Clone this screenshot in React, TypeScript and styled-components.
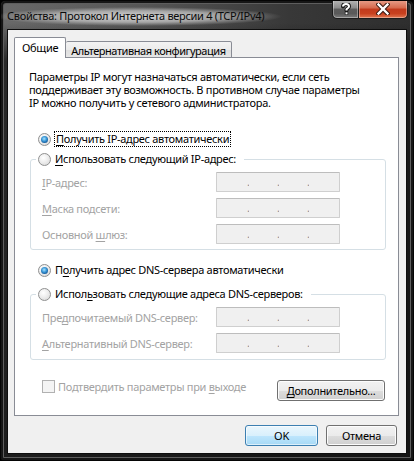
import React from 'react';
import styled, { createGlobalStyle } from 'styled-components';

const Global = createGlobalStyle`
  html, body { margin: 0; padding: 0; background: #000; }
  body { font-family: "Noto Sans", "Open Sans", sans-serif; font-size: 11px; letter-spacing: -0.3px; color: #000; }
  * { box-sizing: border-box; }
`;

const Window = styled.div`
  width: 414px;
  height: 461px;
  border: 1px solid #050505;
  border-radius: 6px 6px 4px 4px;
  background:
    linear-gradient(180deg, rgba(0,0,0,0) 0px, rgba(0,0,0,0) 22px, rgba(20,20,20,0.75) 60px, rgba(15,15,15,0.85) 100%),
    linear-gradient(90deg, #6a6a6a 0%, #555 35%, #383838 70%, #2e2e2e 100%);
  box-shadow: inset 0 0 0 2px #161616, inset 0 0 0 3px #5e5e5e;
  padding: 0 6px 6px 6px;
  display: flex;
  flex-direction: column;
  overflow: hidden;
`;

const TitleBar = styled.div`
  height: 28px;
  display: flex;
  align-items: flex-start;
  justify-content: space-between;
`;

const Title = styled.div`
  margin-top: 6px;
  margin-left: -14px;
  padding: 2px 18px 3px 14px;
  font-size: 11px;
  line-height: 14px;
  white-space: nowrap;
  color: #0a0a0a;
  background: radial-gradient(ellipse closest-side at 50% 50%, rgba(235,235,235,0.85) 0%, rgba(220,220,220,0.6) 60%, rgba(200,200,200,0) 100%);
`;

const CaptionButtons = styled.div`
  display: flex;
  margin-top: -1px;
  margin-right: -1px;
`;

const CaptionButton = styled.div<{ $close?: boolean }>`
  height: 19px;
  width: ${p => (p.$close ? 49 : 27)}px;
  display: flex;
  align-items: center;
  justify-content: center;
  border: 1px solid #1c1c1c;
  border-top: none;
  border-left: ${p => (p.$close ? 'none' : '1px solid #1c1c1c')};
  border-radius: ${p => (p.$close ? '0 0 5px 0' : '0 0 0 5px')};
  box-shadow: inset 0 0 0 1px rgba(255,255,255,0.35);
  background: ${p =>
    p.$close
      ? 'linear-gradient(180deg, #e8a08c 0%, #d6694c 45%, #c23a1d 50%, #c8411f 75%, #e07650 100%)'
      : 'linear-gradient(180deg, #b8b8b8 0%, #8a8a8a 45%, #5c5c5c 50%, #5a5a5a 75%, #7c7c7c 100%)'};
`;

const Client = styled.div`
  flex: 1;
  border: 1px solid #0e0e0e;
  background: #f0f0f0;
  padding: 7px 7px 0 6px;
  display: flex;
  flex-direction: column;
`;

const TabStrip = styled.div`
  display: flex;
  align-items: flex-end;
  height: 21px;
  margin-bottom: -1px;
  position: relative;
  z-index: 1;
`;

const Tab = styled.div<{ $active?: boolean }>`
  height: ${p => (p.$active ? 21 : 17)}px;
  padding: ${p => (p.$active ? '2px 7px 0 7px' : '1px 5px 0 5px')};
  border: 1px solid #898c95;
  border-bottom: ${p => (p.$active ? 'none' : '1px solid #898c95')};
  border-left: ${p => (p.$active ? '1px solid #898c95' : 'none')};
  border-radius: 2px 2px 0 0;
  background: ${p => (p.$active ? '#fff' : 'linear-gradient(180deg, #f3f3f3 0%, #ebebeb 50%, #dedede 51%, #e6e6e6 100%)')};
  line-height: 15px;
  letter-spacing: ${p => (p.$active ? '-0.3px' : '-0.45px')};
  white-space: nowrap;
`;

const Panel = styled.div`
  height: 359px;
  border: 1px solid #898c95;
  background: #fff;
  padding: 12px 12px 0 15px;
  display: flex;
  flex-direction: column;
`;

const Paragraph = styled.p`
  margin: 0 0 0 -1px;
  line-height: 13px;
  width: 338px;
`;

const RadioRow = styled.label<{ $mt: number }>`
  display: flex;
  align-items: center;
  height: 16px;
  margin-top: ${p => p.$mt}px;
  margin-left: 8px;
  gap: 4px;
  line-height: 14px;
  white-space: nowrap;
`;

const RadioCircle = styled.span<{ $checked?: boolean }>`
  width: 13px;
  height: 13px;
  border-radius: 50%;
  border: 1px solid #8f9090;
  background: radial-gradient(circle at 40% 35%, #ffffff 0%, #f0f0f0 40%, #d4d4d4 100%);
  display: flex;
  align-items: center;
  justify-content: center;
  flex: none;
  &::after {
    content: '';
    display: ${p => (p.$checked ? 'block' : 'none')};
    width: 7px;
    height: 7px;
    border-radius: 50%;
    background: radial-gradient(circle at 45% 40%, #a9e4ff 0%, #3d9ad9 40%, #0c4f8f 80%, #0b3f74 100%);
  }
`;

const Focus = styled.span`
  outline: 1px dotted #000;
  outline-offset: 0;
  padding: 0 1px;
`;

const Group = styled.div<{ $mt: number; $pb: number }>`
  margin-top: ${p => p.$mt}px;
  border: 1px solid #d5dfe5;
  border-radius: 3px;
  padding-bottom: ${p => p.$pb}px;
  display: flex;
  flex-direction: column;
`;

const Legend = styled.label`
  align-self: flex-start;
  display: flex;
  align-items: center;
  gap: 4px;
  height: 16px;
  margin: -9px 0 0 5px;
  padding: 0 8px 0 2px;
  background: #fff;
  line-height: 14px;
  white-space: nowrap;
`;

const Fields = styled.div`
  margin-top: 5px;
  padding-left: 11px;
  display: grid;
  grid-template-columns: 174px 124px;
  row-gap: 6px;
  align-items: center;
`;

const FieldLabel = styled.span`
  color: #a3a3a3;
  white-space: nowrap;
`;

const IpBox = styled.div`
  height: 20px;
  border: 1px solid #cfcfcf;
  border-top-color: #bdbdbd;
  border-radius: 1px;
  background: #f0f0f0;
  display: grid;
  grid-template-columns: 30px 30px 30px 30px;
  padding-left: 2px;
`;

const Dot = styled.span`
  justify-self: end;
  color: #8a8a8a;
  font-size: 11px;
  line-height: 18px;
  width: 2px;
  overflow: hidden;
`;

const BottomRow = styled.div`
  margin-top: 20px;
  margin-left: 12px;
  margin-right: 1px;
  display: flex;
  justify-content: space-between;
  align-items: flex-start;
`;

const CheckLabel = styled.label`
  display: flex;
  align-items: center;
  gap: 3px;
  color: #a3a3a3;
  line-height: 13px;
  height: 13px;
`;

const CheckBox = styled.span`
  width: 13px;
  height: 13px;
  border: 1px solid #b1b1b1;
  background: #f4f4f4;
  flex: none;
`;

const Button = styled.button<{ $w: number; $default?: boolean }>`
  width: ${p => p.$w}px;
  height: 21px;
  padding: 0;
  font-family: inherit;
  font-size: 11px;
  letter-spacing: -0.3px;
  color: #000;
  border-radius: 3px;
  border: 1px solid ${p => (p.$default ? '#3c7fb1' : '#707070')};
  box-shadow: inset 0 0 0 1px ${p => (p.$default ? 'rgba(255,255,255,0.6)' : '#fcfcfc')};
  background: ${p =>
    p.$default
      ? 'linear-gradient(180deg, #eaf6fd 0%, #d9f0fc 50%, #bee6fd 51%, #a7d9f5 100%)'
      : 'linear-gradient(180deg, #f2f2f2 0%, #ebebeb 50%, #dddddd 51%, #cfcfcf 100%)'};
  line-height: 17px;
`;

const ButtonRow = styled.div`
  margin-top: 9px;
  margin-right: 2px;
  display: flex;
  justify-content: flex-end;
  gap: 8px;
`;

const IpField = () => (
  <IpBox>
    <Dot>.</Dot>
    <Dot>.</Dot>
    <Dot>.</Dot>
  </IpBox>
);

const U = styled.u`
  text-decoration-thickness: 1px;
  text-underline-offset: 2px;
`;

export default function App() {
  return (
    <>
      <Global />
      <Window>
        <TitleBar>
          <Title>Свойства: Протокол Интернета версии 4 (TCP/IPv4)</Title>
          <CaptionButtons>
            <CaptionButton>
              <svg width="10" height="12" viewBox="0 0 10 12">
                <path d="M2 3.5 C2 1.5 3.5 1 5 1 C6.8 1 8 2 8 3.5 C8 5 6 5.3 5.5 6.5 L5.5 7.5" fill="none" stroke="#1a1a1a" strokeWidth="4" strokeLinecap="round" />
                <path d="M2 3.5 C2 1.5 3.5 1 5 1 C6.8 1 8 2 8 3.5 C8 5 6 5.3 5.5 6.5 L5.5 7.5" fill="none" stroke="#fff" strokeWidth="2" />
                <rect x="3.8" y="8.8" width="3.4" height="3" fill="#1a1a1a" />
                <rect x="4.5" y="9.3" width="2" height="2" fill="#fff" />
              </svg>
            </CaptionButton>
            <CaptionButton $close>
              <svg width="14" height="12" viewBox="0 0 14 12">
                <path d="M2.5 1.5 L11.5 10.5 M11.5 1.5 L2.5 10.5" stroke="#3a1a12" strokeWidth="4.4" strokeLinecap="square" />
                <path d="M2.5 1.5 L11.5 10.5 M11.5 1.5 L2.5 10.5" stroke="#fff" strokeWidth="2.4" strokeLinecap="square" />
              </svg>
            </CaptionButton>
          </CaptionButtons>
        </TitleBar>
        <Client>
          <TabStrip>
            <Tab $active>Общие</Tab>
            <Tab>Альтернативная конфигурация</Tab>
          </TabStrip>
          <Panel>
            <Paragraph>
              Параметры IP могут назначаться автоматически, если сеть поддерживает эту возможность. В противном случае параметры IP можно получить у сетевого администратора.
            </Paragraph>
            <RadioRow $mt={22}>
              <RadioCircle $checked />
              <Focus><U>П</U>олучить IP-адрес автоматически</Focus>
            </RadioRow>
            <Group $mt={12} $pb={5}>
              <Legend>
                <RadioCircle />
                <span><U>И</U>спользовать следующий IP-адрес:</span>
              </Legend>
              <Fields>
                <FieldLabel><U>I</U>P-адрес:</FieldLabel>
                <IpField />
                <FieldLabel><U>М</U>аска подсети:</FieldLabel>
                <IpField />
                <FieldLabel>Основной <U>ш</U>люз:</FieldLabel>
                <IpField />
              </Fields>
            </Group>
            <RadioRow $mt={12}>
              <RadioCircle $checked />
              <span>П<U>о</U>лучить адрес DNS-сервера автоматически</span>
            </RadioRow>
            <Group $mt={16} $pb={6}>
              <Legend>
                <RadioCircle />
                <span>Испол<U>ь</U>зовать следующие адреса DNS-серверов:</span>
              </Legend>
              <Fields>
                <FieldLabel>Пре<U>д</U>почитаемый DNS-сервер:</FieldLabel>
                <IpField />
                <FieldLabel><U>А</U>льтернативный DNS-сервер:</FieldLabel>
                <IpField />
              </Fields>
            </Group>
            <BottomRow>
              <CheckLabel>
                <CheckBox />
                <span>Подтвердить параметры при <U>в</U>ыходе</span>
              </CheckLabel>
              <Button $w={108}><U>Д</U>ополнительно...</Button>
            </BottomRow>
          </Panel>
          <ButtonRow>
            <Button $w={73} $default>OK</Button>
            <Button $w={71}>Отмена</Button>
          </ButtonRow>
        </Client>
      </Window>
    </>
  );
}
